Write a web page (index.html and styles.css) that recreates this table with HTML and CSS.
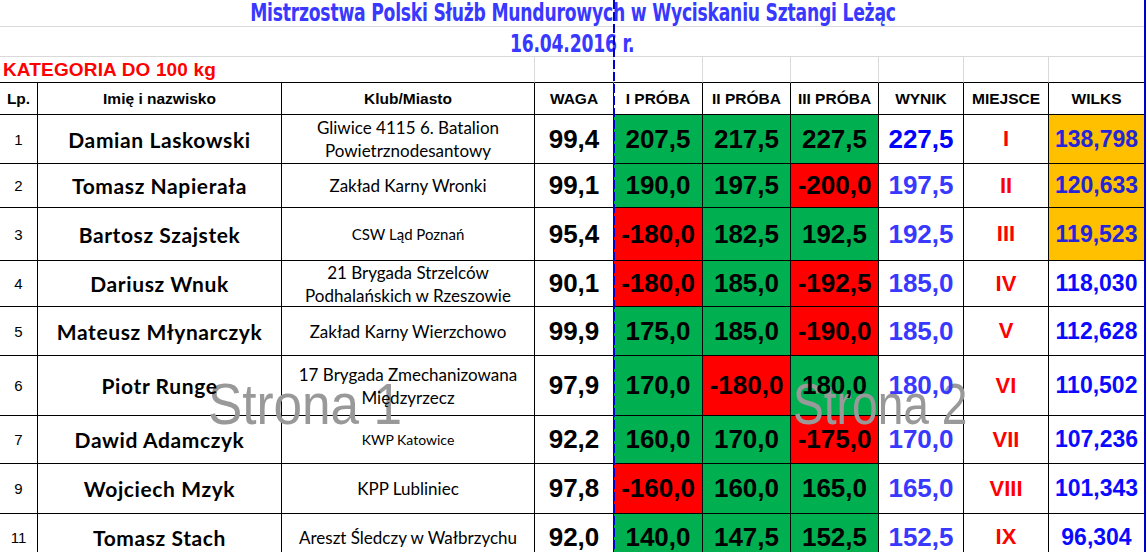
FILE: index.html
```html
<!DOCTYPE html>
<html lang="pl">
<head>
<meta charset="utf-8">
<title>Mistrzostwa Polski Służb Mundurowych</title>
<link rel="stylesheet" href="styles.css">
</head>
<body>
<div class="page">
  <div class="sheet">
    <div class="title"><span class="ttxt">Mistrzostwa Polski Służb Mundurowych w Wyciskaniu Sztangi Leżąc</span></div>
    <div class="title date"><span class="ttxt">16.04.2016 r.</span></div>
    <div class="kat"><span class="ktxt">KATEGORIA DO 100 kg</span></div>
    <div class="ke"></div><div class="ke"></div><div class="ke"></div><div class="ke"></div><div class="ke"></div><div class="ke"></div><div class="ke"></div>

    <div class="c hd">Lp.</div><div class="c hd">Imię i nazwisko</div><div class="c hd">Klub/Miasto</div><div class="c hd">WAGA</div><div class="c hd">I PRÓBA</div><div class="c hd">II PRÓBA</div><div class="c hd">III PRÓBA</div><div class="c hd">WYNIK</div><div class="c hd">MIEJSCE</div><div class="c hd">WILKS</div>

    <div class="c lp"><span>1</span></div><div class="c nm"><span>Damian Laskowski</span></div><div class="c kl"><span>Gliwice 4115 6. Batalion<br>Powietrznodesantowy</span></div><div class="c wg"><span>99,4</span></div><div class="c at ok"><span>207,5</span></div><div class="c at ok"><span>217,5</span></div><div class="c at ok"><span>227,5</span></div><div class="c wy first"><span>227,5</span></div><div class="c mj"><span>I</span></div><div class="c wk top"><span>138,798</span></div>

    <div class="c lp"><span>2</span></div><div class="c nm"><span>Tomasz Napierała</span></div><div class="c kl"><span>Zakład Karny Wronki</span></div><div class="c wg"><span>99,1</span></div><div class="c at ok"><span>190,0</span></div><div class="c at ok"><span>197,5</span></div><div class="c at no"><span>-200,0</span></div><div class="c wy"><span>197,5</span></div><div class="c mj"><span>II</span></div><div class="c wk top"><span>120,633</span></div>

    <div class="c lp"><span>3</span></div><div class="c nm"><span>Bartosz Szajstek</span></div><div class="c kl sm1"><span>CSW Ląd Poznań</span></div><div class="c wg"><span>95,4</span></div><div class="c at no"><span>-180,0</span></div><div class="c at ok"><span>182,5</span></div><div class="c at ok"><span>192,5</span></div><div class="c wy"><span>192,5</span></div><div class="c mj"><span>III</span></div><div class="c wk top"><span>119,523</span></div>

    <div class="c lp"><span>4</span></div><div class="c nm"><span>Dariusz Wnuk</span></div><div class="c kl"><span>21 Brygada Strzelców<br>Podhalańskich w Rzeszowie</span></div><div class="c wg"><span>90,1</span></div><div class="c at no"><span>-180,0</span></div><div class="c at ok"><span>185,0</span></div><div class="c at no"><span>-192,5</span></div><div class="c wy"><span>185,0</span></div><div class="c mj"><span>IV</span></div><div class="c wk"><span>118,030</span></div>

    <div class="c lp"><span>5</span></div><div class="c nm"><span>Mateusz Młynarczyk</span></div><div class="c kl"><span>Zakład Karny Wierzchowo</span></div><div class="c wg"><span>99,9</span></div><div class="c at ok"><span>175,0</span></div><div class="c at ok"><span>185,0</span></div><div class="c at no"><span>-190,0</span></div><div class="c wy"><span>185,0</span></div><div class="c mj"><span>V</span></div><div class="c wk"><span>112,628</span></div>

    <div class="c lp"><span>6</span></div><div class="c nm"><span>Piotr Runge</span></div><div class="c kl"><span>17 Brygada Zmechanizowana<br>Międzyrzecz</span></div><div class="c wg"><span>97,9</span></div><div class="c at ok"><span>170,0</span></div><div class="c at no"><span>-180,0</span></div><div class="c at ok"><span>180,0</span></div><div class="c wy"><span>180,0</span></div><div class="c mj"><span>VI</span></div><div class="c wk"><span>110,502</span></div>

    <div class="c lp"><span>7</span></div><div class="c nm"><span>Dawid Adamczyk</span></div><div class="c kl sm2"><span>KWP Katowice</span></div><div class="c wg"><span>92,2</span></div><div class="c at ok"><span>160,0</span></div><div class="c at ok"><span>170,0</span></div><div class="c at no"><span>-175,0</span></div><div class="c wy"><span>170,0</span></div><div class="c mj"><span>VII</span></div><div class="c wk"><span>107,236</span></div>

    <div class="c lp"><span>9</span></div><div class="c nm"><span>Wojciech Mzyk</span></div><div class="c kl"><span>KPP Lubliniec</span></div><div class="c wg"><span>97,8</span></div><div class="c at no"><span>-160,0</span></div><div class="c at ok"><span>160,0</span></div><div class="c at ok"><span>165,0</span></div><div class="c wy"><span>165,0</span></div><div class="c mj"><span>VIII</span></div><div class="c wk"><span>101,343</span></div>

    <div class="c lp"><span>11</span></div><div class="c nm"><span>Tomasz Stach</span></div><div class="c kl"><span>Areszt Śledczy w Wałbrzychu</span></div><div class="c wg"><span>92,0</span></div><div class="c at ok"><span>140,0</span></div><div class="c at ok"><span>147,5</span></div><div class="c at ok"><span>152,5</span></div><div class="c wy"><span>152,5</span></div><div class="c mj"><span>IX</span></div><div class="c wk"><span>96,304</span></div>
  </div>

  <div class="wm wm1">Strona 1</div>
  <div class="wm wm2">Strona 2</div>
  <div class="brk-dash"></div>
  <div class="brk-edge"></div>
</div>
</body>
</html>
```

FILE: styles.css
```css
html, body {
  margin: 0;
  padding: 0;
  background: #ffffff;
}

.page {
  position: relative;
  width: 1147px;
  height: 552px;
  overflow: hidden;
  font-family: "Liberation Sans", Arial, sans-serif;
}

.sheet {
  display: grid;
  grid-template-columns: 38px 244px 253px 79px 89px 88px 88px 85px 85px 96px;
  grid-template-rows: 27px 30px 26px 32px 49px 44px 53px 46px 49px 60px 48px 50px 47px;
  width: 1145px;
}

.sheet > div {
  box-sizing: border-box;
}

.title {
  grid-column: 1 / -1;
  border-bottom: 1px solid #d9d9d9;
  display: flex;
  align-items: center;
  justify-content: center;
}

.ttxt {
  display: inline-block;
  white-space: nowrap;
  font-family: "DejaVu Sans Condensed", "DejaVu Sans", sans-serif;
  font-stretch: condensed;
  font-weight: bold;
  font-size: 25px;
  line-height: 25px;
  color: #3838ff;
  transform: scaleX(0.765);
  letter-spacing: -0.3px;
}

.title:first-child .ttxt {
  margin-top: -2px;
}

.date .ttxt {
  margin-top: 4px;
}

.kat {
  grid-column: 1 / 4;
  border-right: 1px solid #d9d9d9;
  border-bottom: 1px solid #000000;
  display: flex;
  align-items: center;
  padding-left: 3px;
}

.ktxt {
  font-weight: bold;
  font-size: 19px;
  color: #ff0000;
  white-space: nowrap;
  margin-top: 1px;
  letter-spacing: 0.15px;
}

.ke {
  border-right: 1px solid #d9d9d9;
  border-bottom: 1px solid #000000;
}

.c {
  border-right: 1px solid #000000;
  border-bottom: 1px solid #000000;
  display: flex;
  align-items: center;
  justify-content: center;
  text-align: center;
  white-space: nowrap;
}

.c > span {
  position: relative;
  z-index: 2;
}

.hd {
  font-weight: bold;
  font-size: 15.5px;
  color: #000000;
}

.lp {
  font-size: 15px;
  color: #000000;
}

.nm {
  font-family: "Lato", "Open Sans", sans-serif;
  font-weight: bold;
  font-size: 21px;
  letter-spacing: 0.6px;
  color: #000000;
}

.kl {
  font-family: "Lato", "Open Sans", sans-serif;
  font-size: 17px;
  line-height: 23px;
  color: #000000;
}

.kl.sm1 {
  font-size: 15px;
}

.kl.sm2 {
  font-size: 14px;
}

.wg, .at, .wy {
  font-weight: bold;
  font-size: 26px;
}

.wg, .at {
  color: #000000;
}

.ok {
  background: #00b050;
}

.no {
  background: #ff0000;
}

.wy {
  color: #3838ff;
}

.wy.first {
  color: #0000ff;
}

.mj {
  font-weight: bold;
  font-size: 22px;
  color: #ff0000;
}

.wk {
  font-weight: bold;
  font-size: 23px;
  color: #0a0aff;
}

.wk.top {
  background: #ffc000;
  color: #2424d8;
}

.wm {
  position: absolute;
  z-index: 1;
  top: 376px;
  font-family: "Liberation Sans", Arial, sans-serif;
  font-size: 57px;
  line-height: 57px;
  color: #999999;
  white-space: nowrap;
  transform-origin: left top;
  pointer-events: none;
}

.wm1 {
  left: 208px;
  transform: scaleX(0.9);
}

.wm2 {
  left: 793px;
  transform: scaleX(0.81);
}

.brk-dash {
  position: absolute;
  z-index: 3;
  left: 613px;
  top: 0;
  width: 2px;
  height: 552px;
  background: repeating-linear-gradient(to bottom, #0000cc 0, #0000cc 9px, transparent 9px, transparent 12px);
}

.brk-edge {
  position: absolute;
  z-index: 3;
  left: 1144px;
  top: 0;
  width: 2px;
  height: 552px;
  background: #0000cc;
}
```
